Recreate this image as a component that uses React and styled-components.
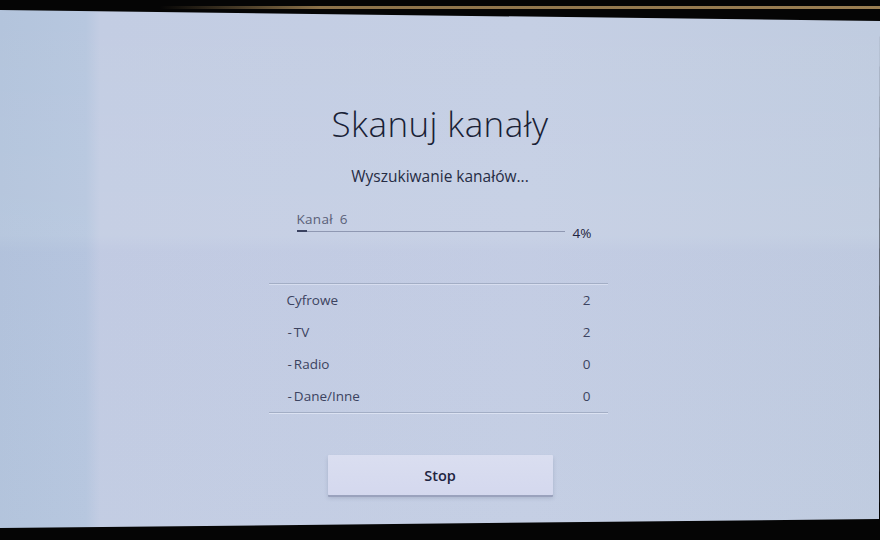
import React from 'react';
import styled, { createGlobalStyle } from 'styled-components';

const GlobalStyle = createGlobalStyle`
  html, body {
    margin: 0;
    padding: 0;
    background: #050505;
  }
  * {
    box-sizing: border-box;
  }
`;

// the TV bezel around the panel, with the gold trim of the stand/shelf at the top
const Frame = styled.div`
  width: 880px;
  height: 540px;
  overflow: hidden;
  background:
    linear-gradient(to right, rgba(140,112,70,0) 160px, #8c7249 320px, #9a7e52 100%) no-repeat 0 6px / 100% 3px,
    #050505;
`;

const Screen = styled.div`
  width: 880px;
  height: 540px;
  display: flex;
  flex-direction: column;
  align-items: center;
  padding-top: 103px;
  clip-path: polygon(0 10px, 100% 21px, 879px 519px, 0 528px);
  background:
    linear-gradient(to bottom, rgba(255,255,255,0) 0, rgba(255,255,255,0.05) 235px, rgba(150,140,210,0.04) 252px, rgba(0,0,0,0) 100%),
    linear-gradient(to right, #b3c4dc 0, #b7c7df 86px, #c3cde3 100px, #c5cfe4 60%, #c0cce0 100%);
  font-family: "Open Sans", "Noto Sans", sans-serif;
  color: #1c2442;
`;

const Title = styled.h1`
  margin: 0;
  font-size: 35px;
  line-height: 42px;
  font-weight: 300;
  letter-spacing: 0.4px;
  color: #1a1f36;
`;

const Subtitle = styled.p`
  margin: 21px 0 0;
  font-size: 15.5px;
  line-height: 20px;
  font-weight: 400;
  color: #262c44;
`;

const Progress = styled.div`
  width: 295px;
  margin: 26px 0 0 8px;
`;

const ChannelLabel = styled.div`
  font-size: 13.5px;
  line-height: 14px;
  color: #5a6078;
  letter-spacing: 0.3px;
  word-spacing: 3px;
`;

const BarRow = styled.div`
  height: 10px;
  display: flex;
  align-items: center;
  gap: 8px;
`;

const Track = styled.div`
  flex: 1;
  height: 1px;
  background: #8f98b2;
`;

const Fill = styled.div`
  height: 2px;
  margin-top: -1px;
  background: #3a4260;
`;

const Percent = styled.span`
  font-size: 13.5px;
  line-height: 10px;
  margin-top: 3px;
  color: #1f2540;
`;

const Stats = styled.ul`
  list-style: none;
  margin: 47px 4px 0 0;
  padding: 0;
  width: 339px;
  border-top: 1px solid #a3aec5;
  border-bottom: 1px solid #a3aec5;
  box-shadow: 0 1px 0 rgba(235,240,252,0.6), inset 0 1px 0 rgba(235,240,252,0.5);
`;

const StatRow = styled.li`
  height: 32px;
  display: flex;
  align-items: center;
  justify-content: space-between;
  padding: 0 17px 0 ${p => (p.$sub ? 19 : 18)}px;
  font-size: 13.5px;
  color: #3c4360;
`;

const Dash = styled.span`
  margin-right: 2px;
`;

const StopButton = styled.button`
  margin-top: 42px;
  width: 225px;
  height: 40px;
  border: none;
  border-radius: 1px;
  background: linear-gradient(to bottom, #dadef0, #d4d8ee);
  box-shadow: 0 2px 0 #9aa2bd, 0 3px 4px rgba(60,70,100,0.2);
  font-family: "Open Sans", "Noto Sans", sans-serif;
  font-size: 14.5px;
  font-weight: 600;
  color: #1e2440;
  padding: 0;
  cursor: pointer;
`;

const stats = [
  { label: 'Cyfrowe', value: 2 },
  { label: 'TV', value: 2, sub: true },
  { label: 'Radio', value: 0, sub: true },
  { label: 'Dane/Inne', value: 0, sub: true },
];

export default function App() {
  const progress = 4;
  return (
    <>
      <GlobalStyle />
      <Frame>
        <Screen>
          <Title>Skanuj kanały</Title>
          <Subtitle>Wyszukiwanie kanałów...</Subtitle>

          <Progress>
            <ChannelLabel>Kanał 6</ChannelLabel>
            <BarRow>
              <Track>
                <Fill style={{ width: `${progress}%` }} />
              </Track>
              <Percent>{progress}%</Percent>
            </BarRow>
          </Progress>

          <Stats>
            {stats.map(s => (
              <StatRow key={s.label} $sub={s.sub}>
                <span>
                  {s.sub && <Dash>-</Dash>}
                  {s.label}
                </span>
                <span>{s.value}</span>
              </StatRow>
            ))}
          </Stats>

          <StopButton>Stop</StopButton>
        </Screen>
      </Frame>
    </>
  );
}
